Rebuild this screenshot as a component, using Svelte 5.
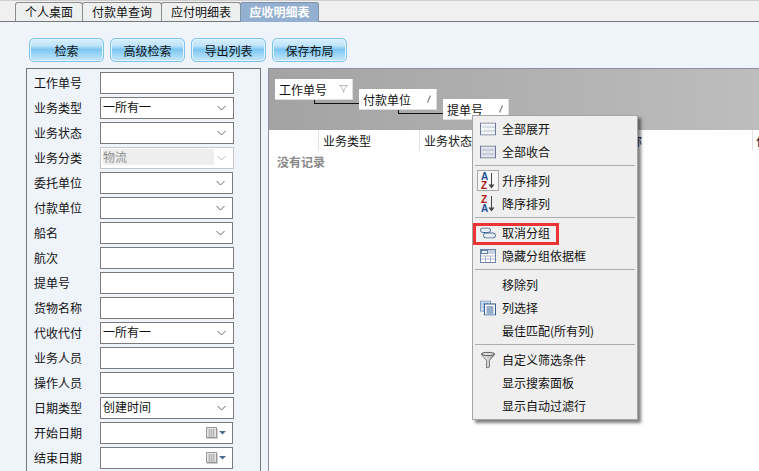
<script>
  const tabs = [
    { t: '个人桌面', w: 68 },
    { t: '付款单查询', w: 80 },
    { t: '应付明细表', w: 80 },
    { t: '应收明细表', w: 79, active: true }
  ];
  const btns = ['检索', '高级检索', '导出列表', '保存布局'];
  const rows = [
    { l: '工作单号', k: 'text' },
    { l: '业务类型', k: 'sel', v: '一所有一' },
    { l: '业务状态', k: 'sel', v: '' },
    { l: '业务分类', k: 'dis', v: '物流' },
    { l: '委托单位', k: 'sel', v: '', narrow: true },
    { l: '付款单位', k: 'sel', v: '', narrow: true },
    { l: '船名', k: 'sel', v: '', narrow: true },
    { l: '航次', k: 'text' },
    { l: '提单号', k: 'text' },
    { l: '货物名称', k: 'text' },
    { l: '代收代付', k: 'sel', v: '一所有一' },
    { l: '业务人员', k: 'text' },
    { l: '操作人员', k: 'text' },
    { l: '日期类型', k: 'sel', v: '创建时间' },
    { l: '开始日期', k: 'date', narrow: true },
    { l: '结束日期', k: 'date', narrow: true }
  ];
</script>

<div class="page">
  <div class="tabs">
    {#each tabs as tab}
      <div class="tab" class:active={tab.active} style="width:{tab.w}px">{tab.t}</div>
    {/each}
  </div>

  <div class="toolbar">
    {#each btns as b}
      <button class="btn">{b}</button>
    {/each}
  </div>

  <div class="main">
    <div class="form">
      {#each rows as r}
        <div class="row">
          <span class="lbl">{r.l}</span>
          <div class="field {r.k}" class:narrow={r.narrow}>
            {#if r.k === 'sel'}
              <span class="val">{r.v}</span>
              <svg class="chev" width="9" height="6" viewBox="0 0 9 6"><path d="M.5 1 4.500 5 8.500 1" fill="none" stroke="#666" /></svg>
            {:else if r.k === 'dis'}
              <span class="val disval">{r.v}</span>
              <svg class="chev" width="9" height="6" viewBox="0 0 9 6"><path d="M.5 1 4.500 5 8.500 1" fill="none" stroke="#bbb" /></svg>
            {:else if r.k === 'date'}
              <svg class="cal" width="21" height="12" viewBox="0 0 21 12">
                <rect x="0.5" y="0.5" width="10" height="10" fill="#e6e6e6" stroke="#999" />
                <path d="M2 3h7M2 5h7M2 7h7M2 9h7M3.500 2v8M5.500 2v8M7.500 2v8" stroke="#aaa" stroke-width=".7" />
                <path d="M1 11.500h10.500V2" fill="none" stroke="#ccc" />
                <path d="M13 4h7l-3.500 3.500z" fill="#4d6a8f" />
              </svg>
            {/if}
          </div>
        </div>
      {/each}
    </div>

    <div class="grid">
      <div class="groupbox">
        <div class="gchip g1">
          <span>工作单号</span>
          <svg width="9" height="8" viewBox="0 0 9 8"><path d="M.5.500h8L5.500 3.500 4.500 7.500 3.500 3.500z" fill="#fff" stroke="#aaa" stroke-width=".8" /></svg>
        </div>
        <div class="gline l1"></div>
        <div class="gchip g2">
          <span>付款单位</span>
          <svg width="6" height="8" viewBox="0 0 6 8"><path d="M4.500.500 1.500 7.500" stroke="#888" stroke-width="1.300" /></svg>
        </div>
        <div class="gline l2"></div>
        <div class="gchip g3">
          <span>提单号</span>
          <svg width="6" height="8" viewBox="0 0 6 8"><path d="M4.500.500 1.500 7.500" stroke="#888" stroke-width="1.300" /></svg>
        </div>
      </div>
      <div class="heads">
        <div class="hcell c0"></div>
        <div class="hcell c1">业务类型</div>
        <div class="hcell c2">业务状态</div>
        <div class="hcell c3">业务分类名称</div>
        <div class="hcell c4">付</div>
      </div>
      <div class="empty">没有记录</div>
    </div>
  </div>

  <div class="menu">
    <div class="mi">
      <svg class="ic" width="16" height="13" viewBox="0 0 16 13"><rect x=".5" y=".5" width="15" height="12" fill="#f4f5f8" stroke="#6d7a96" /><path d="M1 4.500h14M1 8.500h14" stroke="#b9c0cd" /><rect x="1" y="5" width="3" height="3" fill="#fff" /></svg>
      <span>全部展开</span>
    </div>
    <div class="mi">
      <svg class="ic" width="16" height="13" viewBox="0 0 16 13"><rect x=".5" y=".5" width="15" height="12" fill="#dfe2e9" stroke="#6d7a96" /><path d="M1 4.500h14M1 8.500h14" stroke="#b4bac7" /></svg>
      <span>全部收合</span>
    </div>
    <div class="sep"></div>
    <div class="mi">
      <div class="icbox">
        <svg width="16" height="18" viewBox="0 0 16 18"><text x="1" y="8" class="az blue">A</text><text x="1" y="17" class="az red">Z</text><path d="M11.500 1v13" stroke="#444" /><path d="M8.500 12.500h6L11.500 16.500z" fill="#444" /></svg>
      </div>
      <span>升序排列</span>
    </div>
    <div class="mi">
      <svg class="ic" width="16" height="18" viewBox="0 0 16 18"><text x="1" y="8" class="az red">Z</text><text x="1" y="17" class="az blue">A</text><path d="M11.500 1v13" stroke="#444" /><path d="M8.500 12.500h6L11.500 16.500z" fill="#444" /></svg>
      <span>降序排列</span>
    </div>
    <div class="sep"></div>
    <div class="mi">
      <svg class="ic" width="16" height="11" viewBox="0 0 16 11"><rect x=".5" y=".5" width="10" height="4.500" rx="2.200" fill="#e8eef6" stroke="#46698f" /><rect x="3.500" y="5.500" width="12" height="5" rx="2.400" fill="#e8eef6" stroke="#46698f" /></svg>
      <span>取消分组</span>
    </div>
    <div class="mi">
      <svg class="ic" width="16" height="14" viewBox="0 0 16 14"><rect x=".5" y=".5" width="15" height="13" fill="#fff" stroke="#6a83a6" /><rect x="1" y="1" width="14" height="4" fill="#c6d2e3" /><path d="M1 7h14M1 10h14M5.500 7v6M10.500 7v6" stroke="#a9b9cf" /><rect x="1.500" y="1.500" width="6" height="3" fill="#eef2f7" stroke="#46698f" stroke-width=".8" /></svg>
      <span>隐藏分组依据框</span>
    </div>
    <div class="sep"></div>
    <div class="mi"><span>移除列</span></div>
    <div class="mi">
      <svg class="ic" width="16" height="15" viewBox="0 0 16 15"><rect x=".5" y=".5" width="10" height="10" fill="#dce6f3" stroke="#7d9bc4" /><path d="M1 3.500h9M1 6.500h9M4 1v9M7 1v9" stroke="#9db5d5" /><rect x="4.500" y="3.500" width="11" height="11" fill="#fff" stroke="#2f5d94" /><path d="M6.500 6.500h7M6.500 8.500h7M6.500 10.500h7M6.500 12.500h7" stroke="#2f5d94" /></svg>
      <span>列选择</span>
    </div>
    <div class="mi"><span>最佳匹配(所有列)</span></div>
    <div class="sep"></div>
    <div class="mi">
      <svg class="ic" width="16" height="17" viewBox="0 0 16 17"><defs><linearGradient id="fg" x1="0" x2="1" y1="0" y2="0"><stop offset="0" stop-color="#f6f6f6" /><stop offset=".55" stop-color="#d0d0d0" /><stop offset="1" stop-color="#888" /></linearGradient></defs><path d="M1 2.500h14L9.500 9v6.500l-3 1V9z" fill="url(#fg)" stroke="#666" stroke-width=".8" /><ellipse cx="8" cy="2.500" rx="6.500" ry="1.700" fill="#dcdcdc" stroke="#555" /></svg>
      <span>自定义筛选条件</span>
    </div>
    <div class="mi"><span>显示搜索面板</span></div>
    <div class="mi"><span>显示自动过滤行</span></div>
  </div>
  <div class="hl"></div>
</div>

<style>
  :global(body) { margin: 0; }
  .page {
    position: relative;
    width: 759px;
    height: 471px;
    overflow: hidden;
    background: #eff3fa;
    font-family: "Noto Sans CJK SC", "Liberation Sans", sans-serif;
    font-size: 12px;
    color: #111;
  }
  .tabs {
    height: 22px;
    box-sizing: border-box;
    padding: 2px 0 0 15px;
    background: #f0f0f0;
    border-top: 1px solid #cfcfcf;
    border-bottom: 1px solid #777;
    display: flex;
    align-items: flex-end;
  }
  .tab {
    box-sizing: border-box;
    height: 19px;
    line-height: 18px;
    text-align: center;
    background: #eef0f0;
    border: 1px solid #8c8c8c;
    border-bottom: none;
    border-radius: 3px 3px 0 0;
    margin-right: -1px;
  }
  .tab.active {
    background: #94b0d0;
    color: #fff;
    font-weight: 700;
    margin-bottom: -1px;
    height: 20px;
    border-color: #7f92a8;
  }
  .toolbar {
    display: flex;
    gap: 6px;
    padding: 16px 0 0 29px;
    height: 23px;
  }
  .btn {
    width: 75px;
    height: 24px;
    padding: 0;
    box-sizing: border-box;
    font: inherit;
    color: #111;
    border: 1px solid #7cc3ee;
    border-radius: 5px;
    box-shadow: inset 0 0 0 1px #e4f4fd;
    background: linear-gradient(#d7effc 0%, #bfe4fa 30%, #7cc6f3 48%, #9fd6f6 72%, #c8e8fa 100%);
  }
  .main {
    display: flex;
    gap: 7px;
    margin: 7px 0 0 26px;
    align-items: flex-start;
  }
  .form {
    box-sizing: border-box;
    width: 235px;
    height: 410px;
    border: 1px solid #777;
    padding: 3px 0 0 8px;
    display: flex;
    flex-direction: column;
    gap: 3px;
  }
  .row {
    display: flex;
    align-items: center;
    height: 22px;
  }
  .lbl {
    width: 65px;
    line-height: 22px;
    margin-left: -1px;
    margin-right: 1px;
  }
  .field {
    box-sizing: border-box;
    width: 134px;
    height: 22px;
    border: 1px solid #7a7a7a;
    background: #fff;
    display: flex;
    align-items: center;
    padding: 0 5px 2px 2px;
    position: relative;
    line-height: 18px;
  }
  .field.narrow { width: 133px; }
  .val { flex: 1; }
  .dis {
    border-color: #c6c6c6;
    color: #8e8e8e;
  }
  .disval {
    background: #eee;
    height: 16px;
    line-height: 15px;
    margin-right: 3px;
  }
  .chev { margin-left: auto; margin-right: 2px; margin-top: 2px; }
  .cal { margin-left: auto; margin-top: 2px; }
  .grid {
    width: 491px;
    height: 410px;
    box-sizing: border-box;
    border-top: 1px solid #8d8fa0;
    border-left: 1px solid #8d8fa0;
    background: #fff;
  }
  .groupbox {
    position: relative;
    height: 61px;
    background: linear-gradient(90deg, #a3a3a3, #bdbdbd);
  }
  .gchip {
    position: absolute;
    box-sizing: border-box;
    height: 21px;
    background: #fff;
    border-right: 1px solid #ddd;
    border-bottom: 1px solid #ddd;
    display: flex;
    align-items: center;
    justify-content: space-between;
    padding: 0 4px;
  }
  .g1 { left: 6px; top: 10px; width: 78px; }
  .g2 { left: 90px; top: 20px; width: 78px; }
  .g3 { left: 174px; top: 30px; width: 66px; }
  .gline {
    position: absolute;
    box-sizing: border-box;
    height: 4px;
    width: 45px;
    border-left: 1px solid #111;
    border-bottom: 1px solid #111;
  }
  .l1 { left: 45px; top: 31px; }
  .l2 { left: 129px; top: 41px; }
  .heads {
    display: flex;
    height: 21px;
    line-height: 22px;
    background: #fff;
  }
  .hcell {
    flex: none;
    box-sizing: border-box;
    border-right: 1px solid #e2e2e2;
    padding-left: 4px;
    white-space: nowrap;
    overflow: hidden;
  }
  .c0 { width: 50px; }
  .c1 { width: 101px; }
  .c2 { width: 101px; }
  .c3 { width: 232px; padding-left: 49px; }
  .c4 { flex: 1; border: none; padding-left: 3px; }
  .empty {
    margin: 1px 0 0 8px;
    line-height: 20px;
    font-weight: 700;
    color: #8a8a8a;
  }
  .menu {
    position: absolute;
    left: 472px;
    top: 115px;
    width: 166px;
    box-sizing: border-box;
    background: #efefef;
    border: 1px solid #a4a4a4;
    box-shadow: 3px 3px 3px rgba(0, 0, 0, 0.5);
    padding: 1px 2px 2px;
  }
  .mi {
    height: 23px;
    display: flex;
    align-items: center;
    position: relative;
    padding-left: 27px;
    white-space: nowrap;
  }
  .ic {
    position: absolute;
    left: 5px;
    top: 50%;
    transform: translateY(-50%);
  }
  .icbox {
    position: absolute;
    left: 2px;
    top: 1px;
    width: 22px;
    height: 21px;
    box-sizing: border-box;
    border: 1px solid #a8a8a8;
    background: #f6f6f6;
    display: flex;
    align-items: center;
    justify-content: center;
  }
  .sep {
    height: 1px;
    background: #adadad;
    margin: 2px 0 3px;
  }
  .az {
    font-family: "Liberation Sans", sans-serif;
    font-size: 10px;
    font-weight: 700;
  }
  .blue { fill: #1f4e94; }
  .red { fill: #b01818; }
  .hl {
    position: absolute;
    left: 473px;
    top: 223px;
    width: 86px;
    height: 22px;
    box-sizing: border-box;
    border: 3px solid #ee3333;
  }
</style>
